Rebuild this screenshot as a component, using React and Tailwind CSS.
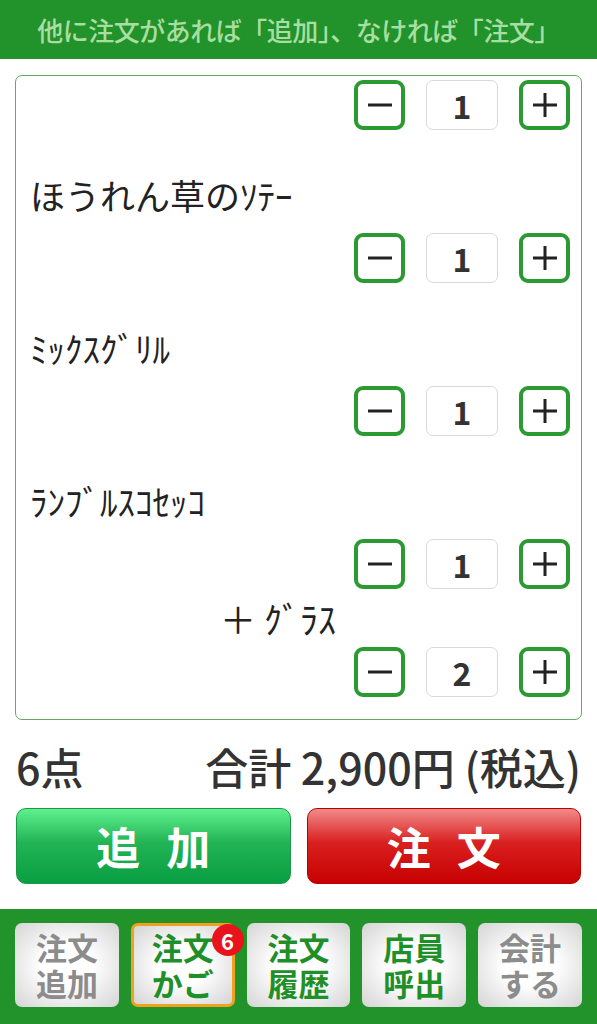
import React from "react";

const JP = { fontFamily: '"Noto Sans CJK JP", "Noto Sans", sans-serif' };

function Stepper({ n }) {
  return (
    <div className="flex justify-end items-center pr-[11px] gap-[21px] h-[50px]">
      <div className="w-[51px] h-[50px] border-[4px] border-[#2b9a33] rounded-[9px] flex items-center justify-center bg-white">
        <svg width="28" height="28" viewBox="0 0 28 28"><path d="M2 14h24" stroke="#222" strokeWidth="3" /></svg>
      </div>
      <div className="w-[72px] h-[50px] border border-[#d9d9d9] rounded-[7px] flex items-center justify-center text-[32px] font-bold text-[#333]" style={JP}>
        {n}
      </div>
      <div className="w-[51px] h-[50px] border-[4px] border-[#2b9a33] rounded-[9px] flex items-center justify-center bg-white">
        <svg width="28" height="28" viewBox="0 0 28 28"><path d="M2 14h24M14 2v24" stroke="#222" strokeWidth="3" /></svg>
      </div>
    </div>
  );
}

function Name({ children }) {
  return (
    <div className="h-[103px] pt-[48px] pl-[14px]">
      <div className="text-[35px] leading-[34px] text-[#222]" style={JP}>{children}</div>
    </div>
  );
}

function NavBtn({ l1, l2, color, active, badge }) {
  return (
    <div
      className={`relative h-[84px] rounded-[7px] flex items-center justify-center ${active ? "border-[3px] border-[#f0a21e]" : ""}`}
      style={{ background: "radial-gradient(ellipse at center, #ffffff 35%, #d4d4d4 100%)" }}
    >
      <div className="font-bold text-[31px] leading-[36px] text-center" style={{ ...JP, color }}>
        {l1}
        <br />
        {l2}
      </div>
      {badge && (
        <div className="absolute -top-[2px] -right-[12px] w-[32px] h-[32px] rounded-full bg-[#e8131b] text-white text-[22px] font-bold flex items-center justify-center leading-none" style={JP}>
          {badge}
        </div>
      )}
    </div>
  );
}

export default function App() {
  return (
    <div className="w-[597px] h-[1024px] bg-white flex flex-col overflow-hidden" style={JP}>
      <div className="h-[59px] bg-[#22922b] flex items-center justify-center text-[26px] text-[#a8dea2] font-medium tracking-[-0.5px]">
        他に注文があれば「追加」、なければ「注文」
      </div>
      <div className="mx-[15px] mt-[16px] h-[645px] border-[1.5px] border-[#66a866] rounded-[7px] pt-[4px]">
        <Stepper n={1} />
        <Name>ほうれん草のｿﾃｰ</Name>
        <Stepper n={1} />
        <Name>ﾐｯｸｽｸﾞﾘﾙ</Name>
        <Stepper n={1} />
        <Name>ﾗﾝﾌﾞﾙｽｺｾｯｺ</Name>
        <Stepper n={1} />
        <div className="h-[58px] flex items-center pl-[204px] text-[36px] text-[#222]">＋ ｸﾞﾗｽ</div>
        <Stepper n={2} />
      </div>
      <div className="flex justify-between items-center px-[16px] mt-[24px] h-[44px] text-[43px] font-medium text-[#333]">
        <div>6点</div>
        <div>合計 2,900円 (税込)</div>
      </div>
      <div className="flex gap-[16px] px-[16px] mt-[20px]">
        <div className="flex-1 h-[76px] rounded-[10px] flex items-center justify-center gap-[26px] text-white text-[44px] font-bold border border-[#1a9a45]"
          style={{ background: "linear-gradient(to bottom, #5ff08f 0%, #22b455 45%, #0a9e42 100%)" }}>
          <span>追</span><span>加</span>
        </div>
        <div className="flex-1 h-[76px] rounded-[10px] flex items-center justify-center gap-[26px] text-white text-[44px] font-bold border border-[#b80000]"
          style={{ background: "linear-gradient(to bottom, #f38a8a 0%, #d92020 45%, #c80000 100%)" }}>
          <span>注</span><span>文</span>
        </div>
      </div>
      <div className="mt-[25px] flex-1 bg-[#22922b] px-[15px] pt-[14px] grid grid-cols-5 gap-[12px] items-start">
        <NavBtn l1="注文" l2="追加" color="#8c8c8c" />
        <NavBtn l1="注文" l2="かご" color="#1f8f2a" active badge="6" />
        <NavBtn l1="注文" l2="履歴" color="#1f8f2a" />
        <NavBtn l1="店員" l2="呼出" color="#1f8f2a" />
        <NavBtn l1="会計" l2="する" color="#8c8c8c" />
      </div>
    </div>
  );
}
